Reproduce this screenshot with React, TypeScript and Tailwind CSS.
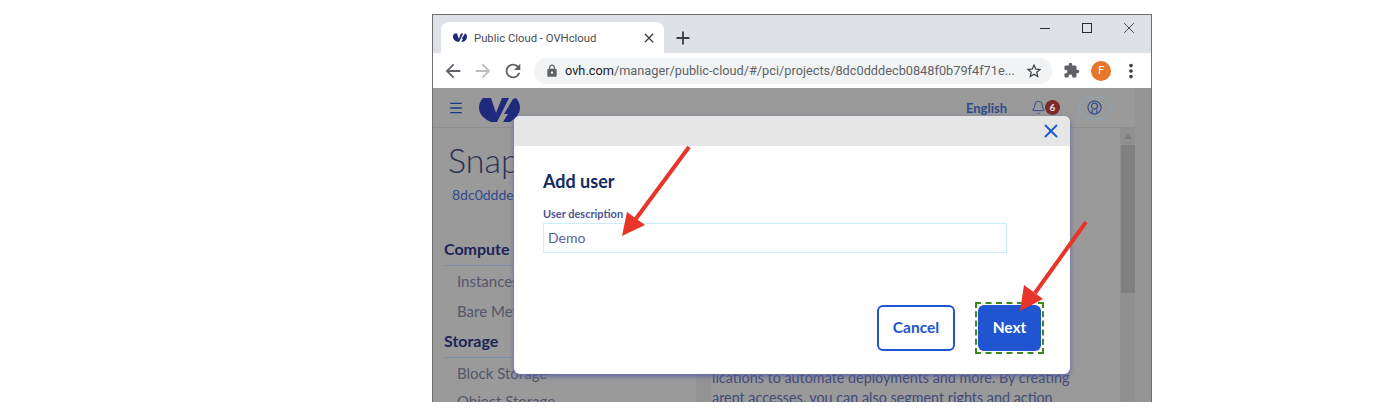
import React from "react";
import { X, Menu, Bell } from "lucide-react";
import { MdAdd, MdArrowBack, MdArrowForward, MdClose, MdExtension, MdLock, MdMoreVert, MdRefresh, MdStarBorder } from "react-icons/md";

const OvhLogo = ({ className }: { className: string }) => (
  <svg viewBox="0 0 41 25" className={className} fill="#1f2a7c">
    <path d="M4 1 L12 1 L17 16 L23 1 L30 1 L18 25 L12 25 C5 22 0 17 0 11 C0 7 1 4 4 1 Z" />
    <path d="M34 2 L37 1 C40 4 41 8 41 11 C41 17 36 22 31 25 L24 25 L29 17 L25 17 Z" />
  </svg>
);

const UserIcon = () => (
  <svg viewBox="0 0 16 16" className="h-[15px] w-[15px]" fill="none" stroke="#2f4a8c" strokeWidth="1.2">
    <circle cx="8" cy="8" r="7" />
    <circle cx="8" cy="6.5" r="3.2" />
    <path d="M5.5 14.4 V10 M10.5 14.4 V10" />
  </svg>
);

const Arrow = ({ className, line, head }: { className: string; line: string; head: string }) => (
  <svg width={80} height={100} className={className}>
    <path d={line} stroke="#e8352a" strokeWidth="4" fill="none" />
    <polygon points={head} fill="#e8352a" />
  </svg>
);

const SideItem = ({ label }: { label: string }) => (
  <div className="h-[30px] pl-[13px] text-[15px] leading-[30px] text-[#54566a] whitespace-nowrap">{label}</div>
);

const SideHeading = ({ label }: { label: string }) => (
  <div className="h-[32px] border-b border-[#7b8fa8] text-[16px] font-bold leading-[30px] text-[#1a2559]">{label}</div>
);

export default function App() {
  return (
    <div className="relative h-[416px] w-[1398px] overflow-hidden bg-white font-['Lato',sans-serif]">
      <div className="ml-[432px] mt-[14px] flex h-[388px] w-[720px] flex-col border border-b-0 border-[#6f6f6f]">
        {/* tab strip */}
        <div className="flex h-[38px] shrink-0 items-end bg-[#dee1e6] pl-[8px]">
          <div className="flex h-[31px] w-[223px] items-center rounded-t-lg bg-white pl-[12px] pr-[7px]">
            <OvhLogo className="h-[9px] w-[14px]" />
            <span className="ml-[7px] mt-[3px] font-['Roboto',sans-serif] text-[11.3px] text-[#4a4c50]">Public Cloud - OVHcloud</span>
            <MdClose className="ml-auto h-[16px] w-[16px] text-[#3c4043]" />
          </div>
          <MdAdd className="mb-[4px] ml-[8px] h-[22px] w-[22px] text-[#3c4043]" />
          <div className="ml-auto flex h-full items-start pr-[13px] pt-[4px] text-[#2a2a2a]">
            <div className="mt-[9px] h-px w-[10px] bg-[#2a2a2a]" />
            <div className="ml-[32px] mt-[4px] h-[10px] w-[10px] border border-[#2a2a2a]" />
            <X className="ml-[28px] h-[18px] w-[18px]" strokeWidth={1.1} />
          </div>
        </div>
        {/* toolbar */}
        <div className="flex h-[35px] shrink-0 items-center bg-white pl-[9px] text-[#5f6368]">
          <MdArrowBack className="h-[22px] w-[22px] shrink-0" />
          <MdArrowForward className="ml-[8px] h-[22px] w-[22px] shrink-0 text-[#babcbe]" />
          <MdRefresh className="ml-[8px] h-[22px] w-[22px] shrink-0" />
          <div className="ml-[10px] flex h-[26px] w-[518px] shrink-0 items-center rounded-full bg-[#f1f3f4] pl-[11px]">
            <MdLock className="h-[14px] w-[14px] shrink-0" />
            <span className="ml-[6px] whitespace-nowrap font-['Roboto',sans-serif] text-[12.75px] text-[#5f6368]">
              <span className="text-[#202124]">ovh.com</span>/manager/public-cloud/#/pci/projects/8dc0dddecb0848f0b79f4f71e...
            </span>
            <MdStarBorder className="ml-auto mr-[9px] h-[18px] w-[18px] shrink-0 text-[#3c4043]" />
          </div>
          <MdExtension className="ml-[11px] h-[17px] w-[17px] shrink-0" />
          <div className="ml-[11px] flex h-[20px] w-[20px] shrink-0 items-center justify-center rounded-full bg-[#e5762a] text-[11px] text-white">F</div>
          <MdMoreVert className="ml-[9px] h-[22px] w-[22px] shrink-0 text-[#3c4043]" />
        </div>
        {/* dimmed page behind the modal */}
        <div className="flex min-h-0 flex-1 overflow-hidden bg-[#9a9a9a]">
          <div className="flex w-[702px] shrink-0 flex-col">
            <div className="flex h-[40px] shrink-0 items-center border-b border-[#8f8f8f] pl-[15px]">
              <Menu className="h-[16px] w-[16px] text-[#1f3a8a]" strokeWidth={2} />
              <OvhLogo className="ml-[15px] mt-[4px] h-[25px] w-[41px]" />
              <span className="ml-auto mt-[3px] text-[13px] font-bold text-[#2f4a8c]">English</span>
              <Bell className="ml-[24px] h-[15px] w-[15px] text-[#2f4a8c]" strokeWidth={1.6} />
              <div className="ml-[-1px] flex h-[15px] w-[15px] items-center justify-center rounded-full bg-[#7f2a2a] text-[10px] font-bold text-[#e5e5e5]">6</div>
              <div className="ml-[18px] mr-[24px] flex h-[22px] w-[33px] items-center justify-center rounded-full border border-[#8ea6b8]">
                <UserIcon />
              </div>
            </div>
            <div className="flex min-h-0 flex-1">
              <div className="w-[263px] shrink-0 pl-[11px]">
                <div className="mt-[11px] h-[42px] pl-[4px] text-[34px] font-light leading-[42px] text-[#2a3050]">Snapshots</div>
                <div className="mt-[2px] h-[24px] pl-[8px] text-[14px] leading-[24px] text-[#2f4a8c]">8dc0dddecb</div>
                <div className="mt-[27px]"><SideHeading label="Compute" /></div>
                <SideItem label="Instances" />
                <SideItem label="Bare Metal" />
                <SideHeading label="Storage" />
                <div className="h-[28px] pl-[13px] text-[15px] leading-[30px] text-[#54566a] whitespace-nowrap">Block Storage</div>
                <SideItem label="Object Storage" />
              </div>
              <div className="w-[15px] shrink-0 bg-[#939393]" />
              <div className="min-w-0 flex-1 overflow-hidden pl-[1px] pt-[240px] text-[14.35px] leading-[20px] text-[#434a78] whitespace-nowrap">
                <div>lications to automate deployments and more. By creating</div>
                <div>arent accesses, you can also segment rights and action</div>
              </div>
              <div className="flex w-[15px] shrink-0 flex-col items-center bg-[#909090]">
                <svg width="8" height="5" viewBox="0 0 8 5" className="mt-[6px]">
                  <polygon points="4,0 8,5 0,5" fill="#7a7a7a" />
                </svg>
                <div className="mt-[6px] h-[148px] w-[14px] bg-[#808080]" />
              </div>
            </div>
          </div>
          <div className="flex-1 bg-[#959595]" />
        </div>
      </div>

      {/* modal */}
      <div className="absolute left-[514px] top-[116px] flex h-[258px] w-[556px] flex-col overflow-hidden rounded-md bg-white shadow-[0_2px_5px_#5d60a0]">
        <div className="flex h-[30px] shrink-0 items-center justify-end bg-[#e6e6e6] pr-[8px]">
          <X className="h-[22px] w-[22px] text-[#2155d0]" strokeWidth={2} />
        </div>
        <div className="flex flex-1 flex-col pl-[29px] pr-[26px]">
          <div className="mt-[22px] text-[18px] font-bold leading-[26px] text-[#122b5e]">Add user</div>
          <div className="mt-[12px] text-[11px] font-bold leading-[16px] text-[#4d5693]">User description</div>
          <div className="mt-[1px] flex h-[30px] w-[464px] items-center border border-[#c9eefb] pb-[2px] pl-[4px] text-[14px] text-[#5b6399]">Demo</div>
          <div className="ml-auto mt-[49px] flex items-center">
            <button className="h-[46px] w-[78px] rounded-md border-2 border-[#2155d0] text-[15.5px] font-bold text-[#2155d0]">Cancel</button>
            <div className="ml-[20px] border-2 border-dashed border-[#3c8a1e] p-[1px]">
              <button className="block h-[46px] w-[63px] rounded-md bg-[#2155d0] text-[15.5px] font-bold text-white">Next</button>
            </div>
          </div>
        </div>
      </div>

      {/* callout arrows */}
      <Arrow className="absolute left-[615px] top-[140px]" line="M74 7 L20 80" head="7,96 12,72 30,85" />
      <Arrow className="absolute left-[1015px] top-[218px]" line="M71 4 L20 75" head="5,93 9,67 28,81" />
    </div>
  );
}
